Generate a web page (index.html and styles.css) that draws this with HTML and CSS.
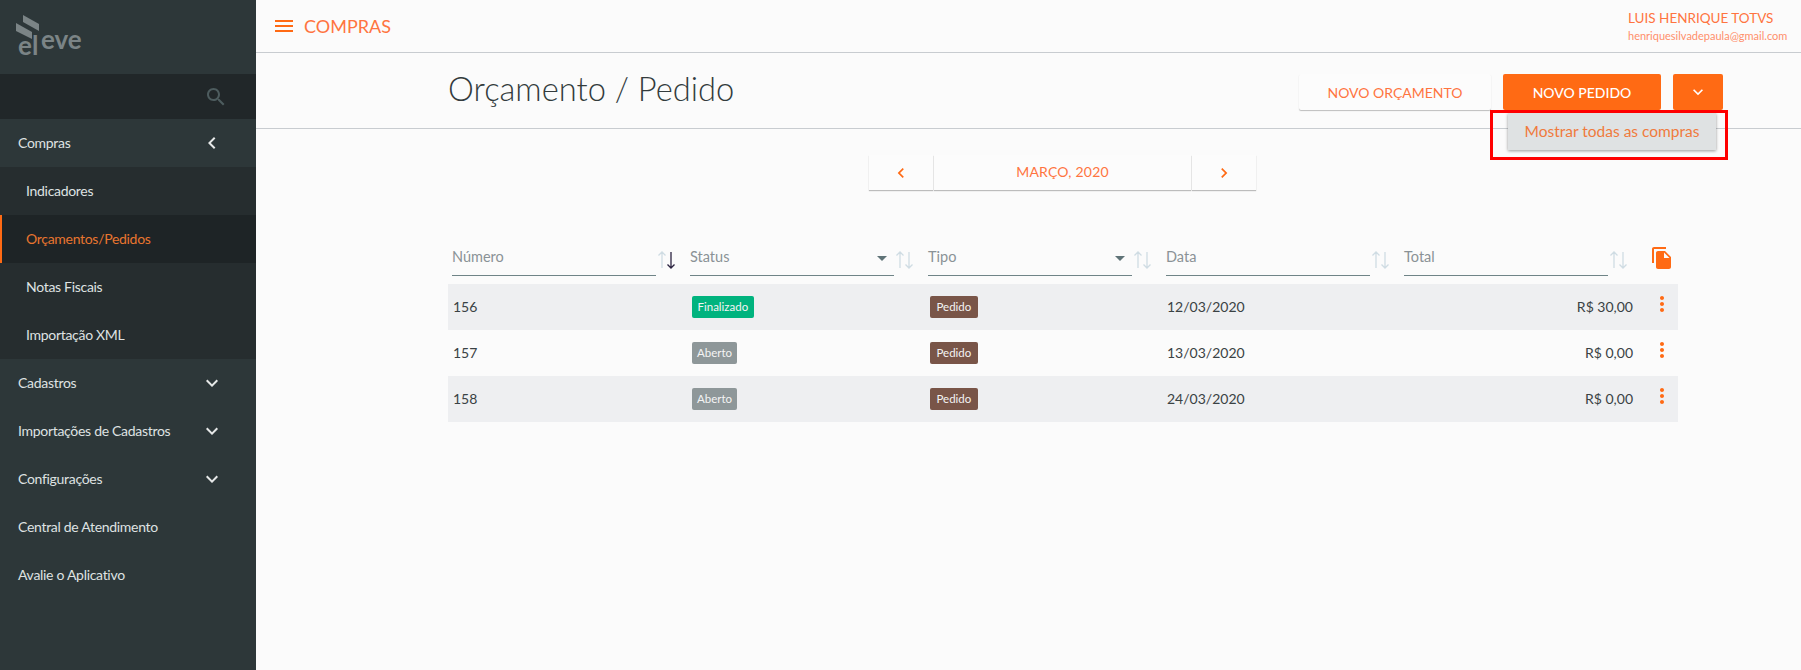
FILE: index.html
```html
<!DOCTYPE html>
<html lang="pt-BR">
<head>
    <meta charset="UTF-8">
    <title>Orçamento / Pedido</title>
    <link rel="stylesheet" href="styles.css">
</head>
<body>
    <aside class="sidebar">
        <div class="logo">
            <svg width="110" height="74" viewBox="0 0 110 74">
                <polygon points="23,15 39,24 39,31 23,22" fill="#7b8486"/>
                <polygon points="16,23 32,32 32,39 16,31" fill="#7b8486"/>
                <text x="18" y="55" class="logo-text">el</text>
                <text x="41" y="49" class="logo-text">eve</text>
            </svg>
        </div>
        <div class="search">
            <svg width="24" height="24" viewBox="0 0 24 24"><path fill="#4d5c5e" d="M15.5 14h-.79l-.28-.27C15.41 12.59 16 11.11 16 9.5 16 5.91 13.09 3 9.5 3S3 5.91 3 9.5 5.91 16 9.5 16c1.61 0 3.09-.59 4.23-1.57l.27.28v.79l5 4.99L20.49 19l-4.99-5zm-6 0C7.01 14 5 11.99 5 9.5S7.01 5 9.500 5 14 7.010 14 9.500 11.990 14 9.500 14z"/></svg>
        </div>
        <nav>
            <a class="nav-item">Compras
                <svg width="24" height="24" viewBox="0 0 24 24"><path fill="#e6e8e8" d="M15.41 7.41L14 6l-6 6 6 6 1.41-1.41L10.83 12z"/></svg>
            </a>
            <div class="submenu">
                <a class="sub-item">Indicadores</a>
                <a class="sub-item active">Orçamentos/Pedidos</a>
                <a class="sub-item">Notas Fiscais</a>
                <a class="sub-item">Importação XML</a>
            </div>
            <a class="nav-item">Cadastros
                <svg width="24" height="24" viewBox="0 0 24 24"><path fill="#e6e8e8" d="M16.59 8.59L12 13.17 7.41 8.59 6 10l6 6 6-6z"/></svg>
            </a>
            <a class="nav-item">Importações de Cadastros
                <svg width="24" height="24" viewBox="0 0 24 24"><path fill="#e6e8e8" d="M16.59 8.59L12 13.17 7.41 8.59 6 10l6 6 6-6z"/></svg>
            </a>
            <a class="nav-item">Configurações
                <svg width="24" height="24" viewBox="0 0 24 24"><path fill="#e6e8e8" d="M16.59 8.59L12 13.17 7.41 8.59 6 10l6 6 6-6z"/></svg>
            </a>
            <a class="nav-item">Central de Atendimento</a>
            <a class="nav-item">Avalie o Aplicativo</a>
        </nav>
    </aside>

    <main class="content">
        <header class="topbar">
            <div class="topbar-title">
                <span class="burger"><i></i><i></i><i></i></span>
                COMPRAS
            </div>
            <div class="user">
                <div class="user-name">LUIS HENRIQUE TOTVS</div>
                <div class="user-mail">henriquesilvadepaula@gmail.com</div>
            </div>
        </header>

        <section class="page-head">
            <h1>Orçamento / Pedido</h1>
            <div class="actions">
                <button class="btn btn-light">NOVO ORÇAMENTO</button>
                <button class="btn btn-primary">NOVO PEDIDO</button>
                <button class="btn btn-primary btn-caret">
                    <svg width="20" height="20" viewBox="0 0 24 24"><path fill="#fff" d="M16.59 8.59L12 13.17 7.41 8.59 6 10l6 6 6-6z"/></svg>
                </button>
                <div class="dropdown">Mostrar todas as compras</div>
                <div class="highlight"></div>
            </div>
        </section>

        <div class="pager">
            <button class="pager-btn">
                <svg width="20" height="20" viewBox="0 0 24 24"><path fill="#ff6a14" d="M15.41 7.41L14 6l-6 6 6 6 1.41-1.41L10.83 12z"/></svg>
            </button>
            <div class="pager-label">MARÇO, 2020</div>
            <button class="pager-btn">
                <svg width="20" height="20" viewBox="0 0 24 24"><path fill="#ff6a14" d="M8.59 16.59L10 18l6-6-6-6-1.41 1.41L13.17 12z"/></svg>
            </button>
        </div>

        <div class="table">
            <div class="filters">
                <div class="filter-col">
                    <div class="filter">Número</div>
                    <svg class="sort" width="24" height="20" viewBox="0 0 24 20"><path class="arrow-off" d="M5 18V2M1.500 5.500L5 2l3.500 3.500"/><path class="arrow-on" d="M14 2v16M10.500 14.500L14 18l3.500-3.500"/></svg>
                </div>
                <div class="filter-col">
                    <div class="filter">Status<span class="caret"></span></div>
                    <svg class="sort" width="24" height="20" viewBox="0 0 24 20"><path class="arrow-off" d="M5 18V2M1.500 5.500L5 2l3.500 3.500"/><path class="arrow-off" d="M14 2v16M10.500 14.500L14 18l3.500-3.500"/></svg>
                </div>
                <div class="filter-col">
                    <div class="filter">Tipo<span class="caret"></span></div>
                    <svg class="sort" width="24" height="20" viewBox="0 0 24 20"><path class="arrow-off" d="M5 18V2M1.500 5.500L5 2l3.500 3.500"/><path class="arrow-off" d="M14 2v16M10.500 14.500L14 18l3.500-3.500"/></svg>
                </div>
                <div class="filter-col">
                    <div class="filter">Data</div>
                    <svg class="sort" width="24" height="20" viewBox="0 0 24 20"><path class="arrow-off" d="M5 18V2M1.500 5.500L5 2l3.500 3.500"/><path class="arrow-off" d="M14 2v16M10.500 14.500L14 18l3.500-3.500"/></svg>
                </div>
                <div class="filter-col">
                    <div class="filter">Total</div>
                    <svg class="sort" width="24" height="20" viewBox="0 0 24 20"><path class="arrow-off" d="M5 18V2M1.500 5.500L5 2l3.500 3.500"/><path class="arrow-off" d="M14 2v16M10.500 14.500L14 18l3.500-3.500"/></svg>
                </div>
                <svg class="copy" width="24" height="24" viewBox="0 0 24 24"><path fill="#ff6a14" d="M16 1H4c-1.100 0-2 .9-2 2v14h2V3h12V1zm-1 4l6 6v10c0 1.100-.9 2-2 2H7.990C6.890 23 6 22.100 6 21l.01-14c0-1.100.89-2 1.990-2h7zm-1 7h5.500L14 6.500V12z"/></svg>
            </div>

            <div class="row">
                <div class="cell">156</div>
                <div><span class="badge badge-green">Finalizado</span></div>
                <div><span class="badge badge-brown">Pedido</span></div>
                <div class="cell">12/03/2020</div>
                <div class="cell total">R$ 30,00</div>
                <svg class="more" width="24" height="24" viewBox="0 0 24 24"><path fill="#ff6a14" d="M12 8c1.100 0 2-.9 2-2s-.9-2-2-2-2 .9-2 2 .9 2 2 2zm0 2c-1.100 0-2 .9-2 2s.9 2 2 2 2-.9 2-2-.9-2-2-2zm0 6c-1.100 0-2 .9-2 2s.9 2 2 2 2-.9 2-2-.9-2-2-2z"/></svg>
            </div>
            <div class="row">
                <div class="cell">157</div>
                <div><span class="badge badge-gray">Aberto</span></div>
                <div><span class="badge badge-brown">Pedido</span></div>
                <div class="cell">13/03/2020</div>
                <div class="cell total">R$ 0,00</div>
                <svg class="more" width="24" height="24" viewBox="0 0 24 24"><path fill="#ff6a14" d="M12 8c1.100 0 2-.9 2-2s-.9-2-2-2-2 .9-2 2 .9 2 2 2zm0 2c-1.100 0-2 .9-2 2s.9 2 2 2 2-.9 2-2-.9-2-2-2zm0 6c-1.100 0-2 .9-2 2s.9 2 2 2 2-.9 2-2-.9-2-2-2z"/></svg>
            </div>
            <div class="row">
                <div class="cell">158</div>
                <div><span class="badge badge-gray">Aberto</span></div>
                <div><span class="badge badge-brown">Pedido</span></div>
                <div class="cell">24/03/2020</div>
                <div class="cell total">R$ 0,00</div>
                <svg class="more" width="24" height="24" viewBox="0 0 24 24"><path fill="#ff6a14" d="M12 8c1.100 0 2-.9 2-2s-.9-2-2-2-2 .9-2 2 .9 2 2 2zm0 2c-1.100 0-2 .9-2 2s.9 2 2 2 2-.9 2-2-.9-2-2-2zm0 6c-1.100 0-2 .9-2 2s.9 2 2 2 2-.9 2-2-.9-2-2-2z"/></svg>
            </div>
        </div>
    </main>
</body>
</html>
```

FILE: styles.css
```css
:root {
    --orange: #ff6a14;
    --orange-text: #ff7440;
    --side-bg: #2d3739;
    --line: #c8ccd0;
}
* {
    margin: 0;
    padding: 0;
    box-sizing: border-box;
}
body {
    display: flex;
    min-height: 100vh;
    overflow: hidden;
    background: #fbfbfb;
    font-family: Lato, "Noto Sans", sans-serif;
    font-size: 14px;
    color: #3a4244;
}
svg {
    display: block;
}

/* sidebar */
.sidebar {
    width: 256px;
    flex-shrink: 0;
    background: var(--side-bg);
    color: #dfe2e2;
    letter-spacing: -0.3px;
}
.logo {
    height: 74px;
}
.logo-text {
    font-family: Lato, sans-serif;
    font-weight: 700;
    font-size: 26px;
    letter-spacing: 0;
    fill: #7b8486;
}
.search {
    height: 45px;
    background: #212729;
    display: flex;
    align-items: center;
    justify-content: flex-end;
    padding-right: 28px;
}
.nav-item {
    height: 48px;
    padding: 0 32px 2px 18px;
    display: flex;
    align-items: center;
    justify-content: space-between;
}
.nav-item svg {
    margin-top: 2px;
}
.submenu {
    background: #262d2f;
}
.sub-item {
    height: 48px;
    padding: 0 0 2px 26px;
    display: flex;
    align-items: center;
}
.sub-item.active {
    background: #1e2426;
    border-left: 2px solid var(--orange);
    padding-left: 24px;
    color: #e8752f;
}

/* main area */
.content {
    flex: 1;
    min-width: 0;
}
.topbar {
    height: 53px;
    border-bottom: 1px solid var(--line);
    display: flex;
    justify-content: space-between;
    align-items: flex-start;
    padding: 0 14px 0 19px;
}
.topbar-title {
    display: flex;
    align-items: center;
    gap: 11px;
    height: 52px;
    font-size: 18px;
    color: var(--orange-text);
}
.burger {
    width: 18px;
    display: flex;
    flex-direction: column;
    gap: 3px;
}
.burger i {
    height: 2px;
    background: var(--orange);
}
.user {
    padding-top: 9px;
    width: 159px;
}
.user-name {
    font-size: 13.500px;
    line-height: 18px;
    color: var(--orange-text);
}
.user-mail {
    font-size: 11px;
    line-height: 18px;
    color: #ff8f6b;
}

.page-head {
    height: 76px;
    border-bottom: 1px solid var(--line);
    display: flex;
    justify-content: space-between;
    padding: 0 78px 0 192px;
}
.page-head h1 {
    font-size: 32.700px;
    font-weight: 300;
    line-height: 72px;
    color: #333b3d;
}
.actions {
    position: relative;
    display: flex;
    gap: 12px;
    padding-top: 21px;
}
.btn {
    height: 36px;
    border: none;
    border-radius: 2px;
    font-family: inherit;
    font-size: 14px;
}
.btn-light {
    width: 192px;
    background: #fcfcfc;
    color: var(--orange-text);
    box-shadow: 0 1px 1px rgba(0, 0, 0, 0.25);
}
.btn-primary {
    width: 158px;
    background: var(--orange);
    color: #fff;
    font-weight: 500;
}
.btn-caret {
    width: 50px;
    display: flex;
    align-items: center;
    justify-content: center;
}
.dropdown {
    position: absolute;
    top: 60px;
    right: 7px;
    width: 208px;
    height: 37px;
    background: #dfe2e3;
    color: #f07a3c;
    font-size: 15.500px;
    line-height: 36px;
    text-align: center;
    box-shadow: 0 1px 3px rgba(0, 0, 0, 0.4);
}
.highlight {
    position: absolute;
    top: 57px;
    right: -5px;
    width: 238px;
    height: 50px;
    border: 3px solid #f00;
}

/* month pager */
.pager {
    display: flex;
    width: 387px;
    height: 35px;
    margin: 26px 0 0 613px;
}
.pager-btn,
.pager-label {
    background: #fcfcfc;
    border: none;
    box-shadow: 0 1px 1px rgba(0, 0, 0, 0.25);
}
.pager-btn {
    width: 64px;
    display: flex;
    align-items: center;
    justify-content: center;
}
.pager-label {
    flex: 1;
    margin: 0 1px;
    text-align: center;
    line-height: 34px;
    letter-spacing: 0.2px;
    color: var(--orange-text);
}

/* table */
.table {
    width: 1230px;
    margin: 54px 0 0 192px;
}
.filters {
    display: flex;
    padding-left: 4px;
    height: 40px;
}
.filter-col {
    width: 238px;
    display: flex;
}
.filter {
    width: 204px;
    height: 32px;
    border-bottom: 1px solid #6f8487;
    color: #8a9296;
    font-size: 14.500px;
    line-height: 26px;
    position: relative;
}
.caret {
    position: absolute;
    right: 7px;
    top: 12px;
    border-left: 5px solid transparent;
    border-right: 5px solid transparent;
    border-top: 5px solid #5f7377;
}
.sort {
    margin: 6px 0 0 1px;
    fill: none;
}
.arrow-off {
    stroke: #cfdce3;
    stroke-width: 1.300;
}
.arrow-on {
    stroke: #2b2340;
    stroke-width: 1.300;
}
.copy {
    margin-left: 8px;
    margin-top: 2px;
}
.row {
    display: grid;
    grid-template-columns: repeat(4, 238px) 229px 24px;
    align-items: center;
    height: 46px;
    padding-left: 5px;
}
.row:nth-of-type(even) {
    background: #eeeff1;
}
.cell {
    margin-bottom: 2px;
}
.total {
    text-align: right;
    padding-right: 1px;
}
.more {
    margin: 0 0 6px 16px;
}
.badge {
    display: inline-block;
    height: 22px;
    margin-left: 1px;
    padding: 0 6px;
    border-radius: 2px;
    font-size: 11.500px;
    line-height: 22px;
    color: #f4f4f4;
}
.badge-green {
    background: #00b37e;
    padding: 0 5.500px;
}
.badge-gray {
    background: #8e9799;
    padding: 0 5px;
}
.badge-brown {
    background: #795548;
    padding: 0 6.500px;
}
```
